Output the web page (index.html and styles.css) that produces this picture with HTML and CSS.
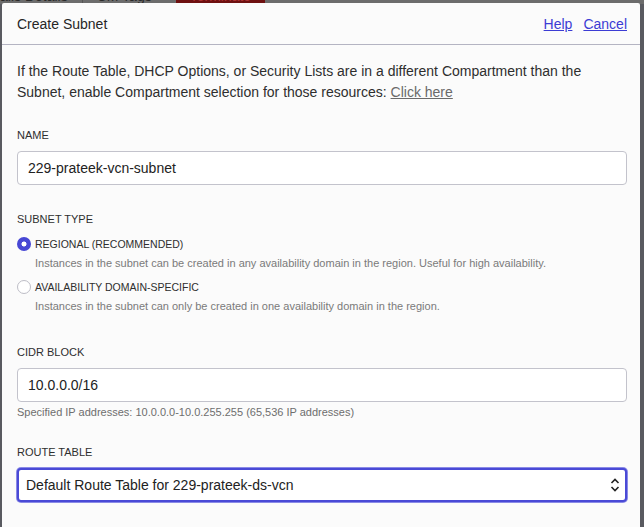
FILE: index.html
```html
<!DOCTYPE html>
<html>
<head>
<meta charset="utf-8">
<link rel="stylesheet" href="styles.css">
</head>
<body>
<div class="backdrop">
  <div class="topbar">
    <span class="tb-text">ails Details</span>
    <span class="tb-sep"></span>
    <span class="tb-text">CM Tags</span>
    <span class="tb-danger">Terminate</span>
  </div>
</div>
<div class="dialog">
  <div class="dlg-head">
    <div class="dlg-title">Create Subnet</div>
    <div class="dlg-links"><a href="#">Help</a><a href="#">Cancel</a></div>
  </div>
  <div class="dlg-body">
    <p class="intro">If the Route Table, DHCP Options, or Security Lists are in a different Compartment than the Subnet, enable Compartment selection for those resources: <a class="muted-link" href="#">Click here</a></p>

    <div class="field name">
      <div class="label">NAME</div>
      <div class="input">229-prateek-vcn-subnet</div>
    </div>

    <div class="field type">
      <div class="label">SUBNET TYPE</div>
      <div class="radio-row first">
        <span class="radio checked"></span>
        <span class="radio-label">REGIONAL (RECOMMENDED)</span>
      </div>
      <div class="radio-desc">Instances in the subnet can be created in any availability domain in the region. Useful for high availability.</div>
      <div class="radio-row">
        <span class="radio"></span>
        <span class="radio-label">AVAILABILITY DOMAIN-SPECIFIC</span>
      </div>
      <div class="radio-desc">Instances in the subnet can only be created in one availability domain in the region.</div>
    </div>

    <div class="field cidr">
      <div class="label">CIDR BLOCK</div>
      <div class="input">10.0.0.0/16</div>
      <div class="hint">Specified IP addresses: 10.0.0.0-10.0.255.255 (65,536 IP addresses)</div>
    </div>

    <div class="field route">
      <div class="label">ROUTE TABLE</div>
      <div class="select">
        <span>Default Route Table for 229-prateek-ds-vcn</span>
        <svg class="chev" width="10" height="16" viewBox="0 0 10 16"><path d="M1.5 6 L5 2.5 L8.5 6" fill="none" stroke="#222" stroke-width="1.6"/><path d="M1.5 10 L5 13.5 L8.5 10" fill="none" stroke="#222" stroke-width="1.6"/></svg>
      </div>
    </div>
  </div>
</div>
</body>
</html>
```

FILE: styles.css
```css
html, body {
  margin: 0;
  padding: 0;
}
body {
  width: 644px;
  height: 527px;
  overflow: hidden;
  background: #5f5f63;
  font-family: "Liberation Sans", Arial, sans-serif;
  position: relative;
}
.backdrop {
  position: absolute;
  left: 0;
  top: 0;
  width: 644px;
  height: 527px;
  background: #595a60;
}
.topbar {
  position: absolute;
  left: 0;
  top: -12px;
  height: 16px;
  width: 644px;
  display: flex;
  align-items: center;
  gap: 14px;
  background: #6c6c6c;
  font-size: 14px;
  color: #2a2a2a;
}
.tb-text {
  line-height: 16px;
}
.tb-sep {
  width: 1px;
  height: 16px;
  background: #555;
}
.tb-danger {
  background: #6e1010;
  color: #a33;
  padding: 0 14px;
  line-height: 16px;
  margin-left: 10px;
}
.dialog {
  position: absolute;
  left: 2px;
  top: 3px;
  width: 638px;
  height: 540px;
  background: #fbfbfb;
  border-radius: 2px;
}
.dlg-head {
  height: 41px;
  border-bottom: 1px solid #b4b4c2;
  display: flex;
  align-items: center;
  justify-content: space-between;
  padding: 0 13px 0 15px;
}
.dlg-title {
  font-size: 14px;
  color: #262626;
}
.dlg-links {
  display: flex;
  gap: 11px;
  font-size: 14px;
}
.dlg-links a {
  color: #3c3cd4;
  text-decoration: underline;
}
.dlg-body {
  padding: 16px 13px 0 15px;
}
.intro {
  margin: 0;
  font-size: 14px;
  line-height: 21px;
  color: #2e2e2e;
}
.muted-link {
  color: #6a6a6a;
  text-decoration: underline;
}
.field.name {
  margin-top: 26px;
}
.field.type {
  margin-top: 28px;
}
.label {
  font-size: 11px;
  color: #2e2e2e;
  line-height: 13px;
  margin-bottom: 9px;
}
.input, .select {
  height: 34px;
  box-sizing: border-box;
  border: 1px solid #c3c3cc;
  border-radius: 4px;
  background: #fff;
  padding: 0 10px;
  display: flex;
  align-items: center;
  font-size: 14px;
  color: #222;
}
.radio-row {
  display: flex;
  align-items: center;
  gap: 4px;
  height: 14px;
  margin-top: 10px;
}
.radio-row.first {
  margin-top: 11px;
}
.radio {
  width: 14px;
  height: 14px;
  box-sizing: border-box;
  border-radius: 50%;
  border: 1px solid #bdbdc6;
  background: #fff;
  flex: none;
}
.radio.checked {
  border: none;
  background: radial-gradient(circle, #fff 0 2.2px, #4747d4 2.8px);
}
.radio-label {
  font-size: 10.5px;
  color: #2e2e2e;
}
.radio-desc {
  font-size: 11px;
  color: #7a7a7a;
  margin: 6px 0 0 18px;
  line-height: 13px;
}
.field.cidr {
  margin-top: 33px;
}
.hint {
  font-size: 11px;
  color: #6e6e6e;
  margin-top: 4px;
  line-height: 13px;
}
.field.route {
  margin-top: 27px;
}
.select {
  border: 2px solid #4a4ad6;
  box-shadow: 0 0 0 1px #8a8ae6;
  padding: 0 5px 0 7px;
  justify-content: space-between;
}
.chev {
  flex: none;
}
```
